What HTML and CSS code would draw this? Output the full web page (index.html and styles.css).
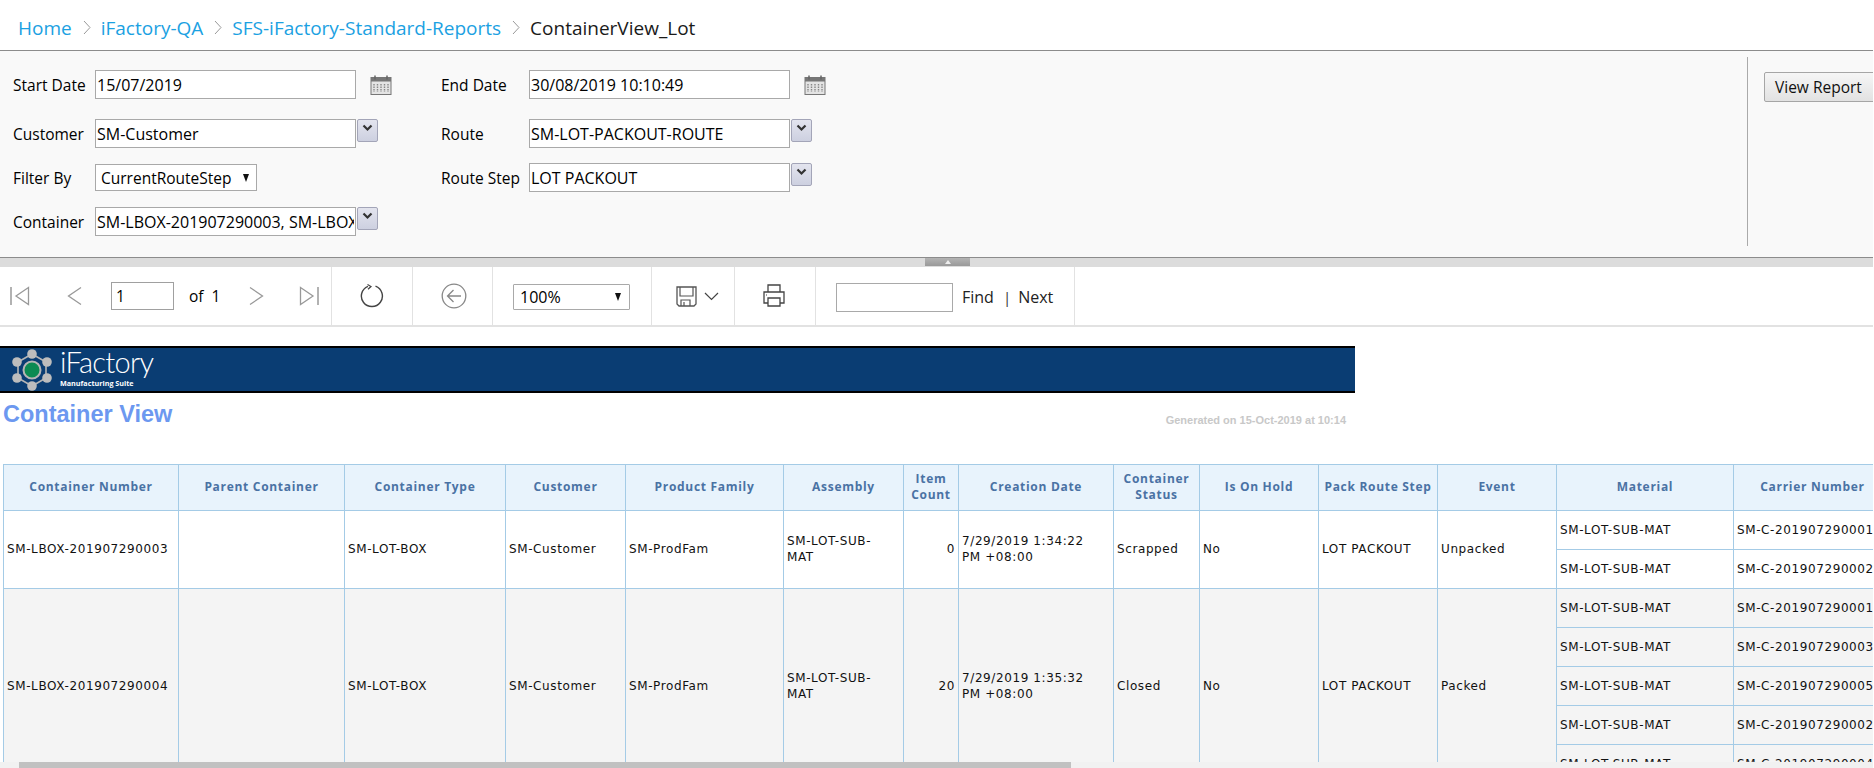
FILE: index.html
```html
<!DOCTYPE html>
<html>
<head>
	<meta charset="utf-8">
	<title>ContainerView_Lot</title>
	<link rel="stylesheet" href="styles.css">
</head>
<body>
<div class="page">

	<div class="crumbs">
		<a class="crumb crumb-home">Home</a>
		<svg class="crumb-sep" width="8" height="15" viewBox="0 0 8 15"><path d="M1 1l6 6.5-6 6.5" fill="none" stroke="#999" stroke-width="1"/></svg>
		<a class="crumb">iFactory-QA</a>
		<svg class="crumb-sep" width="8" height="15" viewBox="0 0 8 15"><path d="M1 1l6 6.5-6 6.5" fill="none" stroke="#999" stroke-width="1"/></svg>
		<a class="crumb">SFS-iFactory-Standard-Reports</a>
		<svg class="crumb-sep" width="8" height="15" viewBox="0 0 8 15"><path d="M1 1l6 6.5-6 6.5" fill="none" stroke="#999" stroke-width="1"/></svg>
		<span class="crumb crumb-current">ContainerView_Lot</span>
	</div>

	<div class="params">
		<div class="param-grid">
			<label>Start Date</label>
			<input class="field" type="text" value="15/07/2019">
			<div class="addon">
				<svg class="cal" width="22" height="20" viewBox="0 0 22 20"><use href="#cal-icon"/></svg>
			</div>
			<label>End Date</label>
			<input class="field" type="text" value="30/08/2019 10:10:49">
			<div class="addon">
				<svg class="cal" width="22" height="20" viewBox="0 0 22 20"><use href="#cal-icon"/></svg>
			</div>

			<label>Customer</label>
			<input class="field" type="text" value="SM-Customer">
			<div class="addon"><span class="drop"><svg width="11" height="8" viewBox="0 0 11 8"><path d="M1.5 1.5l4 4 4-4" fill="none" stroke="#333" stroke-width="2.2"/></svg></span></div>
			<label>Route</label>
			<input class="field" type="text" value="SM-LOT-PACKOUT-ROUTE">
			<div class="addon"><span class="drop"><svg width="11" height="8" viewBox="0 0 11 8"><path d="M1.5 1.5l4 4 4-4" fill="none" stroke="#333" stroke-width="2.2"/></svg></span></div>

			<label>Filter By</label>
			<div class="pick pick-filter"><span>CurrentRouteStep</span><i class="tri"></i></div>
			<div class="addon"></div>
			<label>Route Step</label>
			<input class="field" type="text" value="LOT PACKOUT">
			<div class="addon"><span class="drop"><svg width="11" height="8" viewBox="0 0 11 8"><path d="M1.5 1.5l4 4 4-4" fill="none" stroke="#333" stroke-width="2.2"/></svg></span></div>

			<label>Container</label>
			<input class="field" type="text" value="SM-LBOX-201907290003, SM-LBOX-201907290004">
			<div class="addon"><span class="drop"><svg width="11" height="8" viewBox="0 0 11 8"><path d="M1.5 1.5l4 4 4-4" fill="none" stroke="#333" stroke-width="2.2"/></svg></span></div>
		</div>
		<div class="params-side">
			<button class="view-btn">View Report</button>
		</div>
	</div>

	<div class="splitter"><span class="grip"><i></i></span></div>

	<div class="toolbar">
		<div class="tb-group tb-nav">
			<svg class="ic-first" width="20" height="20" viewBox="0 0 20 20"><path d="M1 1v18" stroke="#999" stroke-width="1.5"/><path d="M18.5 1.5L6 10l12.5 8.5z" fill="none" stroke="#999" stroke-width="1.3"/></svg>
			<svg class="ic-prev" width="15" height="20" viewBox="0 0 15 20"><path d="M14 1.5L1.5 10 14 18.5" fill="none" stroke="#999" stroke-width="1.3"/></svg>
			<input class="page-num" type="text" value="1">
			<span class="of-text">of&nbsp;&nbsp;1</span>
			<svg class="ic-next" width="15" height="20" viewBox="0 0 15 20"><path d="M1 1.5L13.5 10 1 18.5" fill="none" stroke="#999" stroke-width="1.3"/></svg>
			<svg class="ic-last" width="20" height="20" viewBox="0 0 20 20"><path d="M19 1v18" stroke="#999" stroke-width="1.5"/><path d="M1.5 1.5L14 10 1.5 18.5z" fill="none" stroke="#999" stroke-width="1.3"/></svg>
		</div>
		<div class="tb-group tb-refresh">
			<svg width="24" height="24" viewBox="0 0 24 24"><path d="M15.5 2.2a10.5 10.5 0 1 1-7.5 0.1" fill="none" stroke="#444" stroke-width="1.4"/><path d="M7.5 0.5l3.5 2-3 2.8" fill="none" stroke="#444" stroke-width="1.2"/></svg>
		</div>
		<div class="tb-group tb-back">
			<svg width="26" height="26" viewBox="0 0 26 26"><circle cx="13" cy="13" r="11.8" fill="none" stroke="#888" stroke-width="1.3"/><path d="M20 13H6.5M12.5 7l-6 6 6 6" fill="none" stroke="#888" stroke-width="1.3"/></svg>
		</div>
		<div class="tb-group tb-zoom">
			<div class="pick pick-zoom"><span>100%</span><i class="tri"></i></div>
		</div>
		<div class="tb-group tb-save">
			<svg width="21" height="21" viewBox="0 0 21 21"><path d="M1 1h19v17l-2 2H3l-2-2z" fill="none" stroke="#555" stroke-width="1.3"/><path d="M4 1v9h13V1M5 20v-6h9v6M8 16v4" fill="none" stroke="#555" stroke-width="1.2"/></svg>
			<svg class="ic-chev" width="15" height="9" viewBox="0 0 15 9"><path d="M1 1l6.5 6.5L14 1" fill="none" stroke="#444" stroke-width="1.2"/></svg>
		</div>
		<div class="tb-group tb-print">
			<svg width="22" height="24" viewBox="0 0 22 24"><path d="M5 8V1h12v7" fill="none" stroke="#444" stroke-width="1.3"/><path d="M5 19H1V8h20v11h-4" fill="none" stroke="#444" stroke-width="1.3"/><path d="M5 14h12v8H5z" fill="none" stroke="#444" stroke-width="1.3"/><path d="M3 11h1" stroke="#444"/></svg>
		</div>
		<div class="tb-group tb-find">
			<input class="find-box" type="text">
			<a class="find-link">Find</a>
			<span class="find-sep">|</span>
			<a class="find-link">Next</a>
		</div>
	</div>

	<div class="report">
		<div class="banner">
			<svg class="logo-mark" width="50" height="44" viewBox="0 0 50 44">
				<path d="M25 6L39 14V30L25 38 11 30V14z" fill="none" stroke="#b5b5b5" stroke-width="1.6"/>
				<circle cx="25" cy="22" r="8.5" fill="#0b8a52" stroke="#b5b5b5" stroke-width="2"/>
				<circle cx="25" cy="6" r="4.8" fill="#bdbdbd"/>
				<circle cx="40" cy="14" r="4.8" fill="#bdbdbd"/>
				<circle cx="40" cy="30" r="4.8" fill="#bdbdbd"/>
				<circle cx="25" cy="38" r="4.8" fill="#bdbdbd"/>
				<circle cx="10" cy="30" r="4.8" fill="#bdbdbd"/>
				<circle cx="10" cy="14" r="4.8" fill="#bdbdbd"/>
			</svg>
			<div class="logo-text">
				<span class="logo-name">iFactory</span>
				<span class="logo-sub">Manufacturing Suite</span>
			</div>
		</div>

		<div class="title-row">
			<h1>Container View</h1>
			<span class="generated">Generated on 15-Oct-2019 at 10:14</span>
		</div>

		<table class="grid">
			<colgroup>
				<col class="c1"><col class="c2"><col class="c3"><col class="c4"><col class="c5"><col class="c6"><col class="c7">
				<col class="c8"><col class="c9"><col class="c10"><col class="c11"><col class="c12"><col class="c13"><col class="c14">
			</colgroup>
			<thead>
				<tr>
					<th>Container Number</th><th>Parent Container</th><th>Container Type</th><th>Customer</th><th>Product Family</th><th>Assembly</th><th>Item Count</th>
					<th>Creation Date</th><th>Container Status</th><th>Is On Hold</th><th>Pack Route Step</th><th>Event</th><th>Material</th><th>Carrier Number</th>
				</tr>
			</thead>
			<tbody>
				<tr>
					<td rowspan="2">SM-LBOX-201907290003</td><td rowspan="2"></td><td rowspan="2">SM-LOT-BOX</td><td rowspan="2">SM-Customer</td><td rowspan="2">SM-ProdFam</td><td rowspan="2" class="tight">SM-LOT-SUB-MAT</td><td rowspan="2" class="num">0</td>
					<td rowspan="2" class="tight">7/29/2019 1:34:22 PM +08:00</td><td rowspan="2">Scrapped</td><td rowspan="2">No</td><td rowspan="2">LOT PACKOUT</td><td rowspan="2">Unpacked</td>
					<td>SM-LOT-SUB-MAT</td><td class="nowrap">SM-C-201907290001</td>
				</tr>
				<tr><td>SM-LOT-SUB-MAT</td><td class="nowrap">SM-C-201907290002</td></tr>
				<tr class="alt">
					<td rowspan="5">SM-LBOX-201907290004</td><td rowspan="5"></td><td rowspan="5">SM-LOT-BOX</td><td rowspan="5">SM-Customer</td><td rowspan="5">SM-ProdFam</td><td rowspan="5" class="tight">SM-LOT-SUB-MAT</td><td rowspan="5" class="num">20</td>
					<td rowspan="5" class="tight">7/29/2019 1:35:32 PM +08:00</td><td rowspan="5">Closed</td><td rowspan="5">No</td><td rowspan="5">LOT PACKOUT</td><td rowspan="5">Packed</td>
					<td>SM-LOT-SUB-MAT</td><td class="nowrap">SM-C-201907290001</td>
				</tr>
				<tr class="alt"><td>SM-LOT-SUB-MAT</td><td class="nowrap">SM-C-201907290003</td></tr>
				<tr class="alt"><td>SM-LOT-SUB-MAT</td><td class="nowrap">SM-C-201907290005</td></tr>
				<tr class="alt"><td>SM-LOT-SUB-MAT</td><td class="nowrap">SM-C-201907290002</td></tr>
				<tr class="alt"><td>SM-LOT-SUB-MAT</td><td class="nowrap">SM-C-201907290004</td></tr>
			</tbody>
		</table>
	</div>

	<div class="hbar"><div class="hbar-thumb"></div></div>
</div>

<!-- shared calendar glyph -->
<svg class="defs" width="0" height="0">
	<symbol id="cal-icon" viewBox="0 0 22 20">
		<rect x="1" y="2.5" width="20" height="17" fill="#e4e4e4" stroke="#777"/>
		<rect x="1" y="2.5" width="20" height="4" fill="#777"/>
		<path d="M5 0.5v4M17 0.5v4" stroke="#666" stroke-width="1.5"/>
		<path d="M4 9v8M7.5 9v8M11 9v8M14.5 9v8M18 9v8" stroke="#888" stroke-width="1.4" stroke-dasharray="1.5 1"/>
	</symbol>
</svg>
</body>
</html>
```

FILE: styles.css
```css
html, body {
	margin: 0;
	padding: 0;
	background: #fff;
	overflow: hidden;
}

.page {
	width: 1873px;
	height: 768px;
	display: flex;
	flex-direction: column;
	overflow: hidden;
	font-family: "Open Sans", "Liberation Sans", sans-serif;
	color: #000;
}

.defs {
	position: absolute;
}

/* breadcrumb */
.crumbs {
	flex: none;
	height: 50px;
	padding-left: 18px;
	display: flex;
	align-items: center;
	font-size: 19px;
	box-sizing: border-box;
	padding-top: 5px;
}

.crumb {
	color: #1ba1e2;
}

.crumb-current {
	color: #1a1a1a;
}

.crumb-sep {
	margin: 0 10px 0 11px;
}

/* parameter panel */
.params {
	flex: none;
	height: 208px;
	box-sizing: border-box;
	display: flex;
	background: #f9f9f9;
	border-top: 1px solid #8c8c8c;
	border-bottom: 1px solid #8c8c8c;
}

.param-grid {
	width: 1747px;
	box-sizing: border-box;
	padding: 19px 0 0 13px;
	display: grid;
	grid-template-columns: 82px 261px 85px 88px 261px 60px;
	grid-template-rows: 34px 29px 29px 29px;
	row-gap: 15px;
	align-content: start;
	align-items: start;
	font-size: 15.5px;
}

.param-grid label {
	line-height: 31px;
	white-space: nowrap;
}

.field {
	box-sizing: border-box;
	width: 261px;
	height: 29px;
	border: 1px solid #a9a9a9;
	background: #fff;
	padding: 1px 1px 0;
	font: 16px "Open Sans", "Liberation Sans", sans-serif;
	color: #000;
	outline: none;
}

.addon {
	display: flex;
}

.cal {
	margin: 5px 0 0 14px;
}

.drop {
	margin-left: 1px;
	box-sizing: border-box;
	width: 21px;
	height: 23px;
	display: flex;
	align-items: center;
	justify-content: center;
	padding-bottom: 5px;
	background: linear-gradient(#e3e4ee, #cdd0e0);
	border: 1px solid #a3a5b8;
	border-radius: 2px;
}

.pick {
	box-sizing: border-box;
	display: flex;
	align-items: center;
	justify-content: space-between;
	background: #fff;
	border: 1px solid #a9a9a9;
	font-size: 15.5px;
}

.pick-filter {
	width: 162px;
	height: 27px;
	margin-top: 1px;
	padding: 0 7px 0 5px;
}

.tri {
	width: 0;
	height: 0;
	border-left: 3.5px solid transparent;
	border-right: 3.5px solid transparent;
	border-top: 8px solid #111;
}

.params-side {
	flex: 1;
	margin: 6px 0 11px;
	border-left: 1px solid #aaa;
	padding: 15px 0 0 16px;
	overflow: hidden;
}

.view-btn {
	width: 112px;
	height: 30px;
	text-align: left;
	padding: 0 0 0 10px;
	background: linear-gradient(#f6f6f6, #e2e2e2);
	border: 1px solid #a6a6a6;
	border-radius: 2px 0 0 2px;
	font: 15.5px "Open Sans", "Liberation Sans", sans-serif;
	color: #111;
	white-space: nowrap;
}

.splitter {
	flex: none;
	height: 9px;
	background: #dcdcdc;
	position: relative;
}

.grip {
	position: absolute;
	left: 925px;
	top: 0;
	width: 45px;
	height: 8px;
	background: linear-gradient(#b4b4b4, #999);
	display: flex;
	justify-content: center;
	align-items: center;
}

.grip i {
	width: 0;
	height: 0;
	border-left: 3px solid transparent;
	border-right: 3px solid transparent;
	border-bottom: 4px solid #eee;
}

/* toolbar */
.toolbar {
	flex: none;
	height: 60px;
	box-sizing: border-box;
	display: flex;
	border-bottom: 2px solid #e2e2e2;
}

.tb-group {
	flex: none;
	box-sizing: border-box;
	height: 58px;
	display: flex;
	align-items: center;
	border-right: 1px solid #e2e2e2;
}

.tb-nav { width: 332px; padding-left: 10px; }
.tb-refresh { width: 81px; padding-left: 28px; }
.tb-back { width: 80px; padding-left: 28px; }
.tb-zoom { width: 159px; padding-left: 20px; padding-top: 2px; }
.tb-save { width: 83px; padding-left: 24px; }
.tb-print { width: 81px; padding-left: 28px; }
.tb-find { width: 259px; padding-left: 20px; padding-top: 2px; }

.ic-prev { margin-left: 37px; }
.page-num {
	box-sizing: border-box;
	width: 63px;
	height: 28px;
	margin-left: 29px;
	padding: 0 4px;
	border: 1px solid #a0a0a0;
	font: 15.5px "Open Sans", "Liberation Sans", sans-serif;
	outline: none;
}
.of-text {
	width: 60px;
	margin-left: 15px;
	font-size: 15.5px;
}
.ic-last { margin-left: 35px; }

.pick-zoom {
	width: 117px;
	height: 26px;
	padding: 0 8px 0 6px;
	border-radius: 1px;
	font-size: 16px;
}

.ic-chev { margin-left: 7px; }

.find-box {
	box-sizing: border-box;
	width: 117px;
	height: 29px;
	border: 1px solid #a9a9a9;
	outline: none;
}

.find-link {
	font-size: 16px;
	color: #222;
}

.tb-find .find-link:first-of-type { margin-left: 9px; }

.find-sep {
	margin: 0 7px 0 9px;
	font-size: 15px;
	color: #333;
}

/* report body */
.report {
	flex: 1;
	min-height: 0;
	overflow: hidden;
	padding-top: 19px;
}

.banner {
	width: 1355px;
	height: 47px;
	box-sizing: border-box;
	border-top: 2px solid #000;
	border-bottom: 2px solid #000;
	background: #0a3d73;
	display: flex;
	align-items: center;
}

.logo-mark {
	flex: none;
	margin-left: 7px;
}

.logo-text {
	margin: -7px 0 0 3px;
	display: flex;
	flex-direction: column;
	color: #fff;
}

.logo-name {
	font-family: Lato, "Open Sans", sans-serif;
	font-size: 29px;
	font-weight: 300;
	letter-spacing: -0.7px;
}

.logo-sub {
	font-size: 7.2px;
	font-weight: 700;
	line-height: 9px;
}

.title-row {
	width: 1346px;
	height: 71px;
	padding-left: 3px;
	box-sizing: border-box;
	display: flex;
	justify-content: space-between;
	align-items: flex-start;
	font-family: "Liberation Sans", Arial, sans-serif;
}

.title-row h1 {
	margin: 8px 0 0;
	font-size: 23.5px;
	line-height: 26px;
	font-weight: 700;
	color: #6c98f0;
}

.generated {
	margin-top: 21px;
	font-size: 11px;
	font-weight: 700;
	color: #c8c8c8;
}

.grid {
	margin-left: 3px;
	width: 1888px;
	table-layout: fixed;
	border-collapse: collapse;
	font-family: "DejaVu Sans", Verdana, sans-serif;
	font-size: 12px;
	line-height: 16px;
	letter-spacing: 0.6px;
}

.c1 { width: 175px; }
.c2 { width: 166px; }
.c3 { width: 161px; }
.c4 { width: 120px; }
.c5 { width: 158px; }
.c6 { width: 120px; }
.c7 { width: 55px; }
.c8 { width: 155px; }
.c9 { width: 86px; }
.c10 { width: 119px; }
.c11 { width: 119px; }
.c12 { width: 119px; }
.c13 { width: 177px; }
.c14 { width: 158px; }

.grid th {
	height: 44px;
	padding: 0 2px 1px;
	background: #e8f3fc;
	border: 1px solid #a4cbe6;
	font-family: "Open Sans", "Liberation Sans", sans-serif;
	font-size: 12px;
	font-weight: 700;
	letter-spacing: 0.7px;
	color: #4a72a4;
}

.grid td {
	height: 37px;
	padding: 0 3px 1px;
	border: 1px solid #a4cbe6;
	vertical-align: middle;
	color: #111;
}

.grid .alt td {
	background: #f4f4f4;
}

.grid .num {
	text-align: right;
}

.grid .tight {
	padding-right: 14px;
}

.grid .nowrap {
	white-space: nowrap;
	overflow: hidden;
}

.hbar {
	flex: none;
	height: 6px;
	padding-left: 19px;
	background: #f1f1f1;
}

.hbar-thumb {
	width: 1052px;
	height: 6px;
	background: #c1c1c1;
}
```
